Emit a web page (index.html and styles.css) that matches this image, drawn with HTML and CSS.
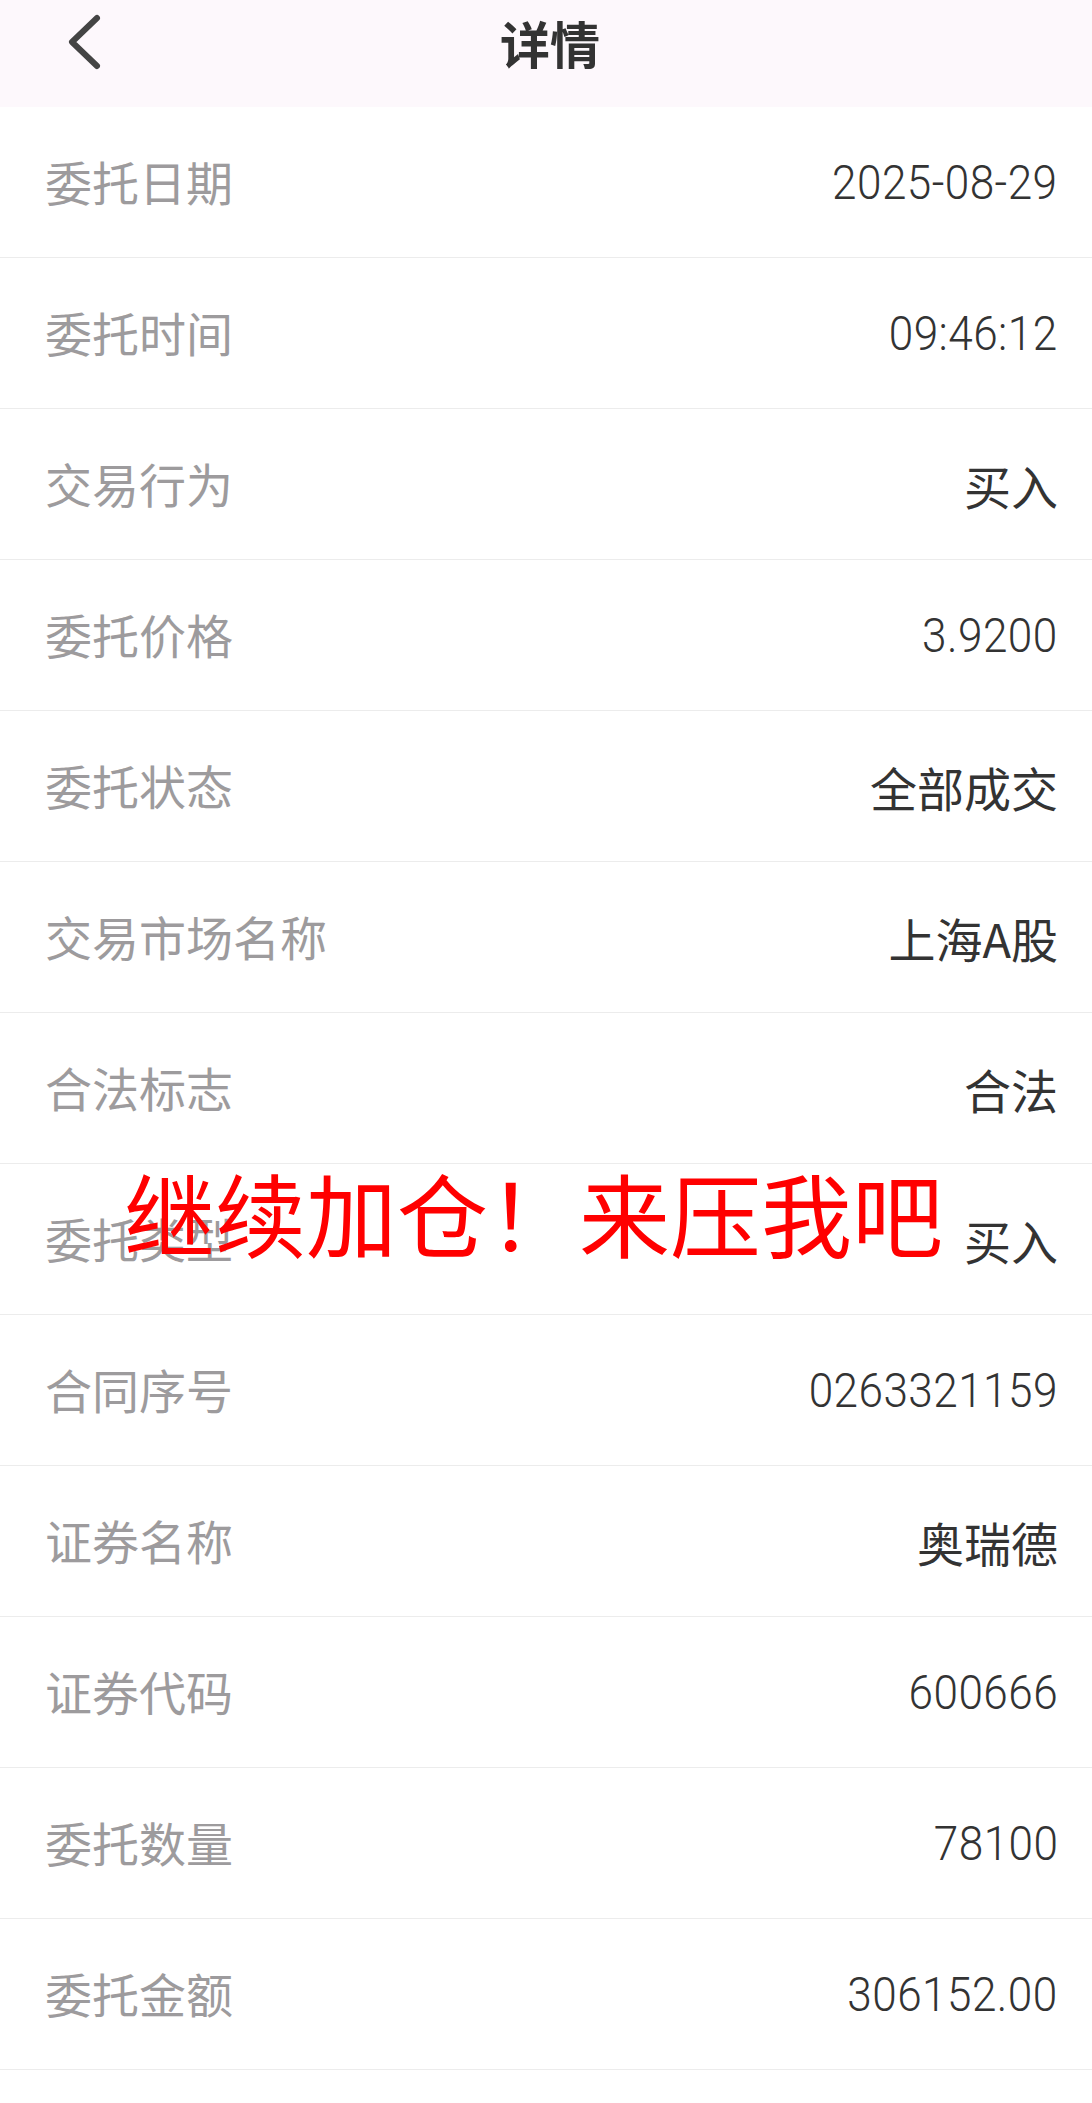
FILE: index.html
```html
<!DOCTYPE html>
<html lang="zh-CN">
<head>
    <meta charset="UTF-8">
    <meta name="viewport" content="width=device-width, initial-scale=1.0">
    <title>详情</title>
    <link rel="stylesheet" href="styles.css">
</head>
<body>
    <div class="page">
        <div class="top-bar">
            <div class="back-btn">
                <svg width="40" height="60" viewBox="0 0 40 60">
                    <path d="M33 6 L8 30 L33 54" fill="none" stroke="#444" stroke-width="6" stroke-linecap="round" stroke-linejoin="round"/>
                </svg>
            </div>
            <div class="title">详情</div>
            <div></div>
        </div>

        <div class="detail-list">
            <div class="detail-row"><span class="label">委托日期</span><span class="value num">2025-08-29</span></div>
            <div class="detail-row"><span class="label">委托时间</span><span class="value num">09:46:12</span></div>
            <div class="detail-row"><span class="label">交易行为</span><span class="value">买入</span></div>
            <div class="detail-row"><span class="label">委托价格</span><span class="value num">3.9200</span></div>
            <div class="detail-row"><span class="label">委托状态</span><span class="value">全部成交</span></div>
            <div class="detail-row"><span class="label">交易市场名称</span><span class="value">上海A股</span></div>
            <div class="detail-row"><span class="label">合法标志</span><span class="value">合法</span></div>
            <div class="detail-row"><span class="label">委托类型</span><span class="value">买入</span></div>
            <div class="detail-row"><span class="label">合同序号</span><span class="value num">0263321159</span></div>
            <div class="detail-row"><span class="label">证券名称</span><span class="value">奥瑞德</span></div>
            <div class="detail-row"><span class="label">证券代码</span><span class="value num">600666</span></div>
            <div class="detail-row"><span class="label">委托数量</span><span class="value num">78100</span></div>
            <div class="detail-row"><span class="label">委托金额</span><span class="value num">306152.00</span></div>
        </div>

        <div class="stamp">继续加仓！来压我吧</div>
    </div>
</body>
</html>
```

FILE: styles.css
```css
body {
    margin: 0;
    background-color: #fff;
    font-family: "Noto Sans CJK SC", "Noto Sans", sans-serif;
}

.page {
    position: relative;
    width: 1092px;
}

.top-bar {
    height: 107px;
    box-sizing: border-box;
    padding-bottom: 24px;
    background-color: #fdf8fc;
    display: grid;
    grid-template-columns: 1fr auto 1fr;
    align-items: center;
}

.back-btn {
    padding-left: 64px;
    display: flex;
    align-items: center;
}

.back-btn svg {
    display: block;
}

.title {
    font-size: 50px;
    line-height: 1;
    font-weight: bold;
    color: #333;
    padding-left: 8px;
}

.detail-row {
    height: 150px;
    border-bottom: 1px solid #ececec;
    display: flex;
    align-items: center;
    justify-content: space-between;
    padding: 0 34px 0 45px;
}

.label {
    font-size: 47px;
    color: #9d9b9d;
    margin-top: -3px;
}

.value {
    font-size: 47px;
    color: #333;
}

.value.num {
    font-family: Roboto, "Noto Sans CJK SC", sans-serif;
    font-size: 49px;
    font-weight: 300;
    letter-spacing: 0.5px;
    display: inline-block;
    transform: scaleX(0.9);
    transform-origin: right center;
}

.stamp {
    position: absolute;
    left: 124px;
    top: 1166px;
    font-size: 91px;
    line-height: 1;
    color: #ff0000;
    white-space: nowrap;
}
```
